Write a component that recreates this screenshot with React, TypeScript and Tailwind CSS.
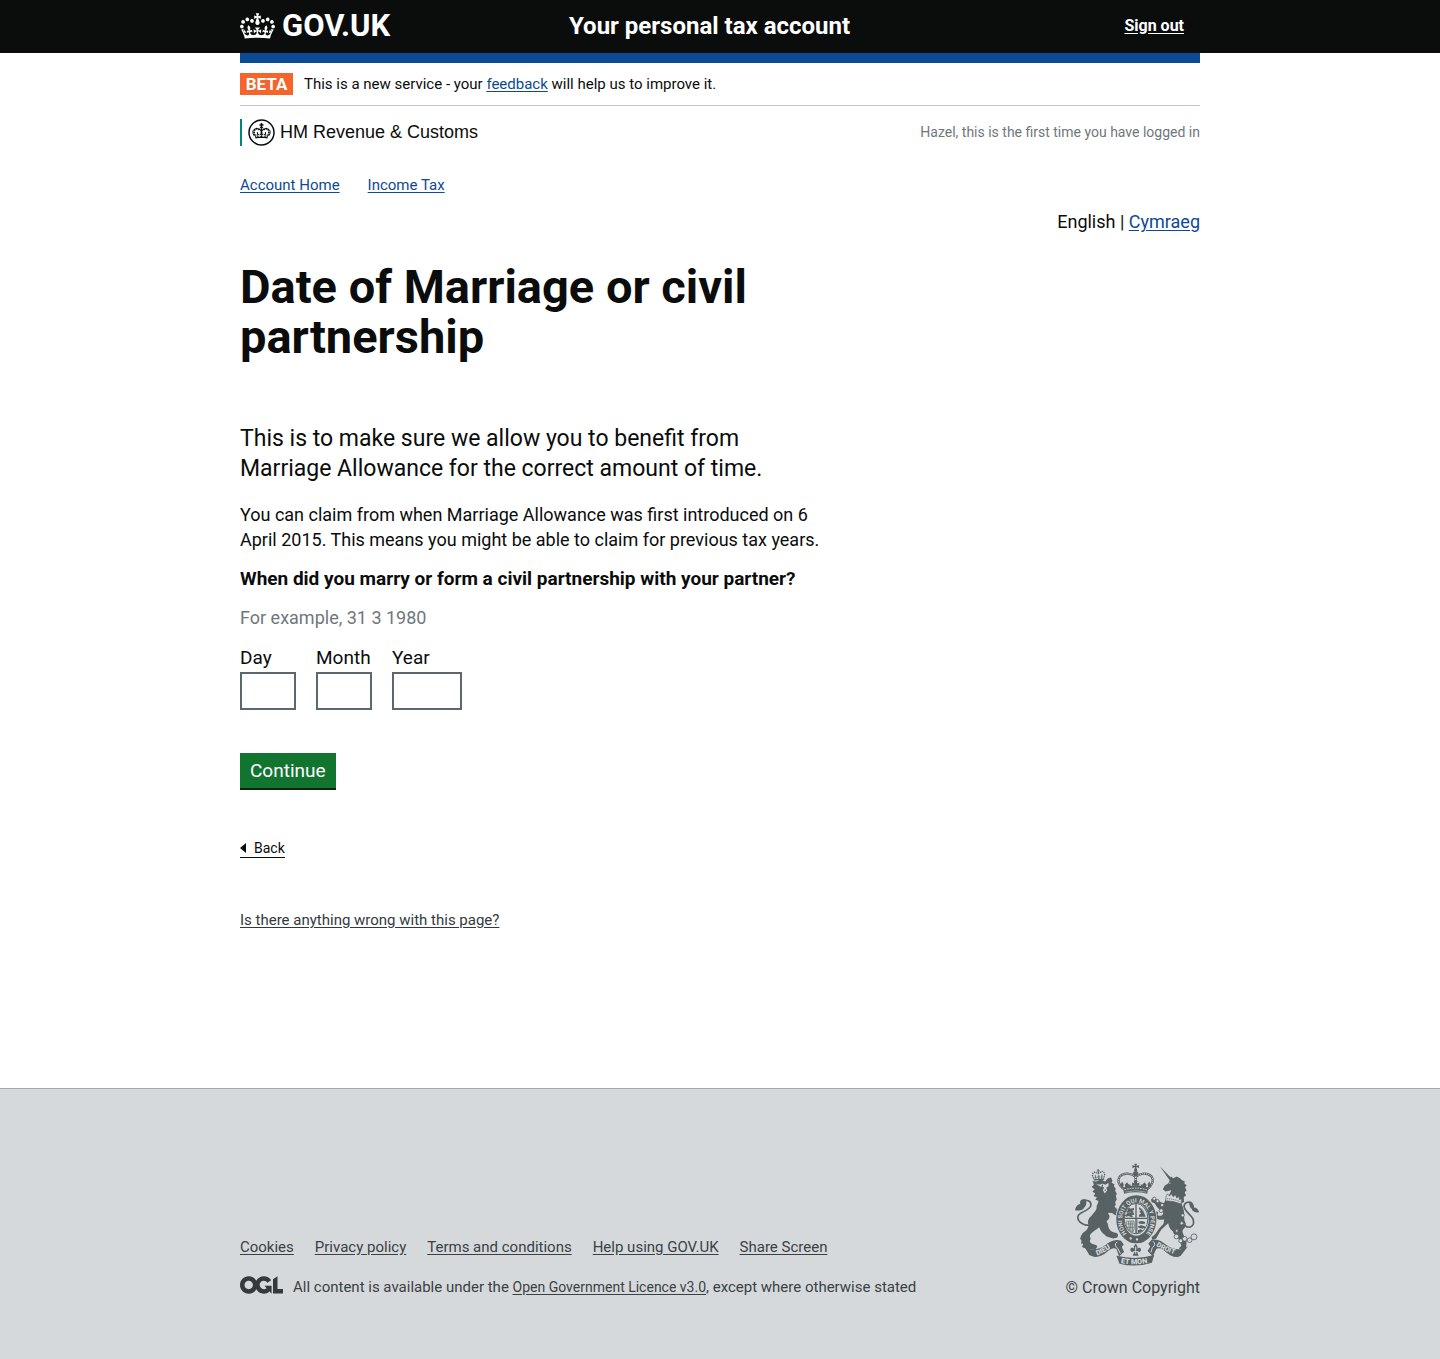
import type { ReactNode } from "react";

const CROWN =
  "M25 30.2c3.5 1.5 7.7-.2 9.1-3.7 1.5-3.6-.2-7.8-3.9-9.2-3.6-1.4-7.6.3-9.1 3.9-1.4 3.5.3 7.5 3.9 9zM9 39.5c3.6 1.5 7.8-.2 9.2-3.7 1.5-3.6-.2-7.8-3.9-9.1-3.6-1.5-7.6.2-9.1 3.8-1.4 3.5.3 7.5 3.8 9zM4.4 57.2c3.5 1.5 7.7-.2 9.1-3.8 1.5-3.6-.2-7.7-3.9-9.1-3.5-1.5-7.6.3-9.1 3.8-1.4 3.5.3 7.6 3.9 9.1zm38.3-21.4c3.5 1.5 7.7-.2 9.1-3.8 1.5-3.6-.2-7.7-3.9-9.1-3.6-1.5-7.6.3-9.1 3.8-1.3 3.6.4 7.7 3.9 9.1zm64.4-5.6c-3.6 1.5-7.8-.2-9.1-3.7-1.5-3.6.2-7.8 3.8-9.2 3.6-1.4 7.7.3 9.2 3.9 1.3 3.5-.4 7.5-3.9 9zm15.9 9.3c-3.6 1.5-7.7-.2-9.1-3.7-1.5-3.6.2-7.8 3.7-9.1 3.6-1.5 7.7.2 9.2 3.8 1.5 3.5-.3 7.5-3.8 9zm4.7 17.7c-3.6 1.5-7.8-.2-9.2-3.8-1.5-3.6.2-7.7 3.9-9.1 3.6-1.5 7.7.3 9.2 3.8 1.3 3.5-.4 7.6-3.9 9.1zM89.3 35.8c-3.6 1.5-7.8-.2-9.2-3.8-1.4-3.6.2-7.7 3.9-9.1 3.6-1.5 7.7.3 9.2 3.8 1.4 3.6-.3 7.7-3.9 9.1zM69.7 17.7l8.9 4.7V9.3l-8.9 2.8c-.2-.3-.5-.6-.9-.9L72.4 0H59.6l3.5 11.2c-.3.3-.6.5-.9.9l-8.8-2.8v13.1l8.8-4.7c.3.3.6.7.9.9l-5 15.4v.1c-.2.8-.4 1.6-.4 2.4 0 4.1 3.1 7.5 7 8.1h.2c.3 0 .7.1 1 .1.4 0 .7 0 1-.1h.2c4-.6 7.1-4.1 7.1-8.1 0-.8-.1-1.7-.4-2.4V34l-5.1-15.4c.4-.2.7-.6 1-.9zM66 92.8c16.9 0 32.8 1.1 47.1 3.2 4-16.9 8.9-26.7 14-33.5l-9.6-3.4c1 4.9 1.1 7.2 0 10.2-1.5-1.4-3-4.3-4.2-8.7L108.6 76c2.8-2 5-3.2 7.5-3.3-4.4 9.4-10 11.9-13.6 11.2-4.3-.8-6.3-4.6-5.6-7.9 1-4.7 5.7-5.9 8-.5 4.3-8.7-3-11.4-7.6-8.8 7.1-7.2 7.9-13.5 2.1-21.1-8 6.1-8.1 12.3-4.5 20.8-4.7-5.4-12.1-2.5-9.5 6.2 3.4-5.2 7.9-2 7.2 3.1-.6 4.3-6.4 7.8-13.5 7.2-10.3-.9-10.9-8-11.2-13.8 2.5-.5 7.1 1.8 11 7.3L80.2 60c-4.1 4.4-8 5.3-12.3 5.4 1.4-4.4 8-11.6 8-11.6H55.5s6.4 7.2 7.9 11.6c-4.2-.1-8-1-12.3-5.4l1.4 16.4c3.9-5.5 8.5-7.7 10.9-7.3-.3 5.8-.9 12.8-11.1 13.8-7.2.6-12.9-2.9-13.5-7.2-.7-5 3.8-8.3 7.1-3.1 2.7-8.7-4.6-11.6-9.4-6.2 3.7-8.5 3.6-14.7-4.6-20.8-5.8 7.6-5 13.9 2.2 21.1-4.7-2.6-11.9.1-7.7 8.8 2.3-5.5 7.1-4.2 8.1.5.7 3.3-1.3 7.1-5.7 7.9-3.5.7-9-1.8-13.5-11.2 2.5.1 4.7 1.3 7.5 3.3l-4.7-15.4c-1.2 4.4-2.7 7.2-4.3 8.7-1.1-3-.9-5.3 0-10.2l-9.5 3.4c5 6.9 9.9 16.7 14 33.5 14.8-2.1 30.8-3.2 47.7-3.2z";

const OGL =
  "M421.5 142.8V.1l-50.7 32.3v161.1h112.4v-50.7zm-122.3-9.6A47.12 47.12 0 0 1 221 97.8c0-26 21.1-47.1 47.1-47.1 16.7 0 31.4 8.7 39.7 21.8l42.7-27.2A97.63 97.63 0 0 0 268.1 0c-36.5 0-68.3 20.1-85.1 49.7A98 98 0 0 0 97.8 0C43.9 0 0 43.9 0 97.8s43.9 97.8 97.8 97.8c36.5 0 68.3-20.1 85.1-49.7a97.76 97.76 0 0 0 149.6 25.4l19.4 22.2h3v-87.8h-80l24.3 27.5zM97.8 145c-26 0-47.1-21.1-47.1-47.1s21.1-47.1 47.1-47.1 47.1 21.1 47.1 47.1S123.8 145 97.8 145";

function Arms() {
  const ink = "#586163";
  const paper = "#d5d9dc";
  return (
    <svg viewBox="43 38 378 311" className="h-[103px] w-[126px]" aria-hidden="true">
      {/* tails */}
      <g fill="none" stroke={ink} strokeLinecap="round" strokeLinejoin="round">
        <path d="M86 226C66 226 50 212 54 198C60 184 92 182 93 164C93 152 80 148 68 152" strokeWidth="5" />
        <path d="M376 226C392 240 406 226 402 210C398 194 376 186 374 170C374 158 388 152 398 160" strokeWidth="5" />
      </g>
      <g fill={ink}>
        <path d="M78 149C68 145 57 150 61 162C55 162 47 168 45 181C56 183 69 180 73 172C79 168 80 158 78 149Z" />
        <path d="M390 155C401 158 405 166 404 172C410 172 418 178 420 187C410 188 398 184 397 176C391 172 389 164 390 155Z" />
        {/* lion */}
        <path d="M98 92L108 94L122 88L136 94L144 84L154 82L158 92L155 98L164 102L162 108L168 116L166 122L171 130L168 138L171 148L166 156L168 164L164 170C172 176 181 184 184 196L187 205L180 208L170 206L176 199L164 194C158 188 150 186 144 190C154 199 147 210 140 214C147 224 143 232 152 242C158 250 171 246 175 254L173 263L160 266L140 260C132 252 122 246 118 232C108 240 96 246 91 254C84 268 88 276 96 282L110 286L112 292L106 299L80 297L66 292L70 282C62 270 60 258 70 248C80 242 84 236 86 226C80 212 88 204 96 196C104 184 112 180 110 168C113 160 116 158 115 152L106 149L111 142L101 138L106 130L97 124L104 118L95 110L102 104Z" />
        <path d="M63 258l-3 10 5 2-2 12 8-1-1 12 14-4 8-22-6-18z" />
        {/* unicorn */}
        <path d="M301 48L338 86L331 91Z" />
        <path d="M331 90L334 78L341 84L352 79L362 84L368 90L376 93L375 99L382 106L377 112L382 120L376 126L380 136L373 141L374 156L366 160C372 174 376 184 374 200L376 214C382 222 380 232 370 240C366 250 380 262 382 274L380 296L372 300L358 296L366 288L362 276C358 262 342 254 340 244C330 238 328 226 326 220C316 230 306 236 300 248L290 266L278 270L276 262L286 254C294 242 302 230 312 222L314 208C300 212 288 208 284 198L288 184L296 186L294 196C304 200 310 196 312 188C300 178 290 170 286 160L276 156L274 148L282 144L294 150C302 156 308 160 314 158L318 150L328 136L336 120L318 124L310 117L316 106L326 100Z" />
      </g>
      {/* coronet collar of the unicorn */}
      <path d="M320 138L324 131L330 138L336 131L341 140L348 134L352 144L359 139L360 149L367 146L366 162Q342 152 318 152Z" fill={paper} stroke={ink} strokeWidth="2" />
      <path d="M322 146Q344 146 364 156" fill="none" stroke={ink} strokeWidth="3" strokeDasharray="3 3" />
      <circle cx="331" cy="99" r="2" fill={paper} />
      {/* lion's face and crown */}
      <path d="M107 100L119 104L128 100L137 104L146 98L146 108L139 112L142 120L135 130L129 120L132 112L122 110Z" fill={paper} />
      <path d="M110 100l12-6 12 6M128 103l-2 9 6 2M134 120l4 0" fill="none" stroke={ink} strokeWidth="4" />
      <g transform="translate(94 58) rotate(-5) scale(.31 .36)" fill={ink}>
        <path d={CROWN} />
      </g>
      {/* chain */}
      <g fill="none" stroke={ink} strokeWidth="2.5">
        <circle cx="404" cy="261" r="9" />
        <circle cx="391" cy="271" r="7" />
        <circle cx="376" cy="267" r="7" fill={paper} />
        <circle cx="364" cy="273" r="6" fill={paper} />
        <circle cx="351" cy="260" r="7" fill={paper} />
        <circle cx="352" cy="243" r="4" fill={paper} />
        <circle cx="367" cy="220" r="5" fill={paper} />
        <circle cx="370" cy="196" r="5" fill={paper} />
        <circle cx="305" cy="182" r="6" fill={paper} />
        <circle cx="308" cy="165" r="5" fill={paper} />
        <circle cx="294" cy="153" r="5" fill={paper} />
        <circle cx="284" cy="146" r="5" fill={paper} />
      </g>
      {/* royal crown */}
      <g fill="none" stroke={ink}>
        <path d="M194 118C176 106 172 90 180 79C192 66 214 68 228 80C242 68 264 66 276 79C284 90 278 106 262 118" strokeWidth="7" />
        <path d="M194 118C176 106 172 90 180 79C192 66 214 68 228 80C242 68 264 66 276 79C284 90 278 106 262 118" stroke={paper} strokeWidth="3" strokeDasharray="3 3" />
        <path d="M228 80V104" strokeWidth="8" />
        <path d="M228 80V104" strokeWidth="4" stroke={paper} strokeDasharray="3 3" />
      </g>
      <g fill={ink}>
        <circle cx="228" cy="70" r="8" />
        <path d="M224 40h8l-2 7 8-3v9l-8-3 3 12h-10l3-12-8 3v-9l8 3z" />
        <path d="M190 112Q228 100 266 112L263 131Q228 122 193 131Z" />
        <path d="M222 92h12l-3 8 8-3v10h-22v-10l8 3zM202 96l5 7 7 1-5 8h-12l-2-8zM254 96l-5 7-7 1 5 8h12l2-8zM187 94l5 8-3 12-8-8zM269 94l-5 8 3 12 8-8z" />
      </g>
      <path d="M194 119Q228 109 262 119" fill="none" stroke={paper} strokeWidth="3" strokeDasharray="5 3" />
      <path d="M196 126Q228 117 260 126" fill="none" stroke={paper} strokeWidth="1.5" />
      {/* garter and shield */}
      <ellipse cx="230" cy="208" rx="63" ry="75" fill={paper} />
      <ellipse cx="230" cy="208" rx="49" ry="61" fill="none" stroke={ink} strokeWidth="23" />
      <path id="garter" d="M201 251A43 54 0 1 1 259 251" fill="none" />
      <text fill={paper} fontFamily="Roboto" fontWeight="700" fontSize="18">
        <textPath href="#garter">HONI SOIT QUI MAL Y PENSE</textPath>
      </text>
      <circle cx="213" cy="266" r="3.5" fill={paper} />
      <circle cx="232" cy="269" r="3.5" fill={paper} />
      <ellipse cx="229" cy="206" rx="36" ry="46" fill={paper} stroke={ink} strokeWidth="3" />
      <path d="M229 160V252M194 205H264" stroke={ink} strokeWidth="4" />
      <g fill={ink}>
        <path d="M203 176l6-4 2 4 12-2v6l-6 2 6 4-4 3-8-4-8 3-5-4 6-2zM201 190l8-3 14 2v5l-8 1 6 4-6 3-8-4-8 2-4-4 6-3zM236 216l8-3 10 2 4 5-8 2-12-1zM235 229l10-3 10 3 3 5-10 2-11-2zM235 241l8-3 7 3-6 5-9 3z" />
        <path d="M238 170q10 4 14 12t6 18h-20v-6l7-4-7-5 6-3-6-4z" />
      </g>
      <g fill="none" stroke={ink} strokeWidth="2">
        <path d="M200 214C196 228 204 242 220 246C226 236 224 222 222 213ZM206 214l4 26M212 214l2 29M217 214l2 30M200 222h22M202 232h20M232 208v42" />
      </g>
      <path d="M232 170c10 0 20 10 24 24" stroke={paper} strokeWidth="2" fill="none" />
      {/* motto ribbons */}
      <g fill={ink}>
        <path d="M72 289C92 304 116 300 136 286C152 274 166 266 184 273L192 284L186 292L193 306L178 320L170 298C162 292 152 298 142 306C124 322 104 326 88 316Z" />
        <path d="M386 289C366 304 342 300 322 286C306 274 294 266 276 270L266 282L272 290L264 304L280 320L290 298C298 292 308 298 318 306C336 322 352 326 364 318Z" />
        <path d="M170 318Q228 332 284 316L277 339Q228 355 179 342Z" />
        <path d="M228 282l6 8-2 10c2-8 12-8 12 0 0 6-5 8-8 5l-3 4 4 9h-18l4-9-3-4c-3 3-8 1-8-5 0-8 10-8 12 0l-2-10z" />
      </g>
      <path d="M172 276q-12 10 2 20l8 16M280 274q12 10-2 20l-4 14M228 290v22M220 306h16" fill="none" stroke={paper} strokeWidth="3" />
      <path id="dieu" d="M111 317Q136 310 170 282" fill="none" />
      <path id="mon" d="M183 340Q228 349 280 337" fill="none" />
      <path id="droit" d="M290 288Q312 304 362 319" fill="none" />
      <g fill={paper} fontFamily="Roboto" fontWeight="900" fontSize="22">
        <text><textPath href="#dieu">DIEU</textPath></text>
        <text><textPath href="#mon">ET MON</textPath></text>
        <text fontSize="21"><textPath href="#droit">DROIT</textPath></text>
      </g>
    </svg>
  );
}

function Link({ children, className = "text-[#0b4a94]" }: { children: ReactNode; className?: string }) {
  return (
    <a href="#" className={`underline underline-offset-2 ${className}`}>
      {children}
    </a>
  );
}

function DateField({ id, label, width }: { id: string; label: string; width: string }) {
  return (
    <div>
      <label htmlFor={id} className="block text-[19px] leading-[25px]">{label}</label>
      <input id={id} type="text" inputMode="numeric" className={`mt-0.5 block h-[38px] border-2 border-[#5c6870] bg-white px-1 text-[19px] ${width}`} />
    </div>
  );
}

const footerLinks = ["Cookies", "Privacy policy", "Terms and conditions", "Help using GOV.UK", "Share Screen"];

export default function App() {
  return (
    <div className="flex min-h-screen flex-col bg-white font-['Roboto',sans-serif] text-[#0b0c0c]">
      <header className="bg-[#0b0c0c] text-white">
        <div className="mx-auto grid h-[53px] max-w-[960px] grid-cols-3 items-center pb-0.5">
          <a href="#" className="flex items-center gap-[7px] text-[31px] leading-8 font-bold">
            <svg viewBox="0 0 132 97" className="h-[26px] w-[35px]" fill="currentColor" aria-hidden="true">
              <path d={CROWN} />
            </svg>
            GOV.UK
          </a>
          <a href="#" className="pl-[9px] text-2xl leading-[30px] font-bold whitespace-nowrap">Your personal tax account</a>
          <a href="#" className="justify-self-end pr-4 text-base leading-5 font-bold underline underline-offset-2">Sign out</a>
        </div>
      </header>

      <div className="mx-auto w-full max-w-[960px] grow">
        <div className="h-[10px] bg-[#0b4a94]" />
        <div className="flex h-[43px] items-center border-b border-[#bfc1c3] text-[15px]">
          <strong className="mr-[11px] w-[53px] bg-[#f4642b] text-center text-[17px] leading-[22px] font-bold text-white">BETA</strong>
          <p>This is a new service - your <Link>feedback</Link> will help us to improve it.</p>
        </div>

        <div className="mt-[13px] flex items-center justify-between">
          <div className="flex h-[27px] items-center border-l-2 border-[#00857a] pl-1.5 font-['Liberation_Sans',sans-serif] text-lg">
            <svg viewBox="0 0 54 54" className="mr-[5px] h-[27px] w-[27px]" aria-hidden="true">
              <circle cx="27" cy="27" r="25" fill="none" stroke="#0b0c0c" strokeWidth="3" />
              <g transform="translate(10.5 13) scale(.25 .27)" fill="#0b0c0c">
                <path d={CROWN} />
              </g>
              <path d="M13 34C8 29 9 21 14 20C20 18 25 21 27 24C29 21 34 18 40 20C45 21 46 29 41 34" fill="none" stroke="#0b0c0c" strokeWidth="2" />
              <path d="M27 8v10M23 12h8M27 20v10" stroke="#0b0c0c" strokeWidth="3" />
            </svg>
            <span className="pb-0.5">HM Revenue &amp; Customs</span>
          </div>
          <p className="pb-0.5 text-sm text-[#6f777b]">Hazel, this is the first time you have logged in</p>
        </div>

        <nav className="mt-[29px] flex gap-7 text-[15px] leading-5">
          <Link>Account Home</Link>
          <Link>Income Tax</Link>
        </nav>

        <p className="mt-[14px] text-right text-lg leading-[25px]">
          English | <Link>Cymraeg</Link>
        </p>

        <main className="max-w-[600px]">
          <h1 className="mt-7 text-[47px] leading-[50px] font-bold">Date of Marriage or civil partnership</h1>
          <p className="mt-[62px] max-w-[540px] text-[23px] leading-[30px]">
            This is to make sure we allow you to benefit from Marriage Allowance for the correct amount of time.
          </p>
          <p className="mt-[18px] text-lg leading-[25px]">
            You can claim from when Marriage Allowance was first introduced on 6 April 2015. This means you might be able to claim for previous tax years.
          </p>
          <form onSubmit={(e) => e.preventDefault()}>
            <fieldset>
              <legend className="pt-[14px] text-[19px] leading-[25px] font-bold">When did you marry or form a civil partnership with your partner?</legend>
              <p className="mt-[14px] text-lg leading-[25px] text-[#6f777b]">For example, 31 3 1980</p>
              <div className="mt-[15px] flex gap-5">
                <DateField id="day" label="Day" width="w-14" />
                <DateField id="month" label="Month" width="w-14" />
                <DateField id="year" label="Year" width="w-[70px]" />
              </div>
            </fieldset>
            <button type="submit" className="mt-[43px] block h-[35px] bg-[#11752f] px-[10px] text-[19px] leading-[25px] text-white shadow-[0_2px_0_#052410]">
              Continue
            </button>
          </form>
          <a href="#" className="mt-[51px] inline-flex items-center gap-2 border-b border-[#0b0c0c] text-sm leading-[18px]">
            <svg viewBox="0 0 6 10" className="h-[10px] w-1.5" aria-hidden="true">
              <path d="M6 0v10L0 5z" fill="#0b0c0c" />
            </svg>
            Back
          </a>
          <p className="mt-[50px] pb-24 text-[15px] leading-5">
            <Link className="text-[#333a3d]">Is there anything wrong with this page?</Link>
          </p>
        </main>
      </div>

      <footer className="border-t border-[#a1a9ad] bg-[#d5d9dc] pt-[74px] pb-[61px] text-[#3a4144]">
        <div className="mx-auto flex max-w-[960px] items-end justify-between">
          <div className="text-[15px] leading-5">
            <ul className="flex gap-[21px]">
              {footerLinks.map((l) => (
                <li key={l}><Link className="">{l}</Link></li>
              ))}
            </ul>
            <div className="mt-[19px] flex items-center gap-[10px]">
              <svg viewBox="0 0 483.2 195.7" className="mb-1 h-[18px] w-[43px]" fill="#363a3c" aria-hidden="true">
                <path d={OGL} />
              </svg>
              <p>
                All content is available under the <Link className="text-sm">Open Government Licence v3.0</Link>, except where otherwise stated
              </p>
            </div>
          </div>
          <a href="#" className="flex flex-col items-end gap-3 text-base leading-5">
            <Arms />
            © Crown Copyright
          </a>
        </div>
      </footer>
    </div>
  );
}
